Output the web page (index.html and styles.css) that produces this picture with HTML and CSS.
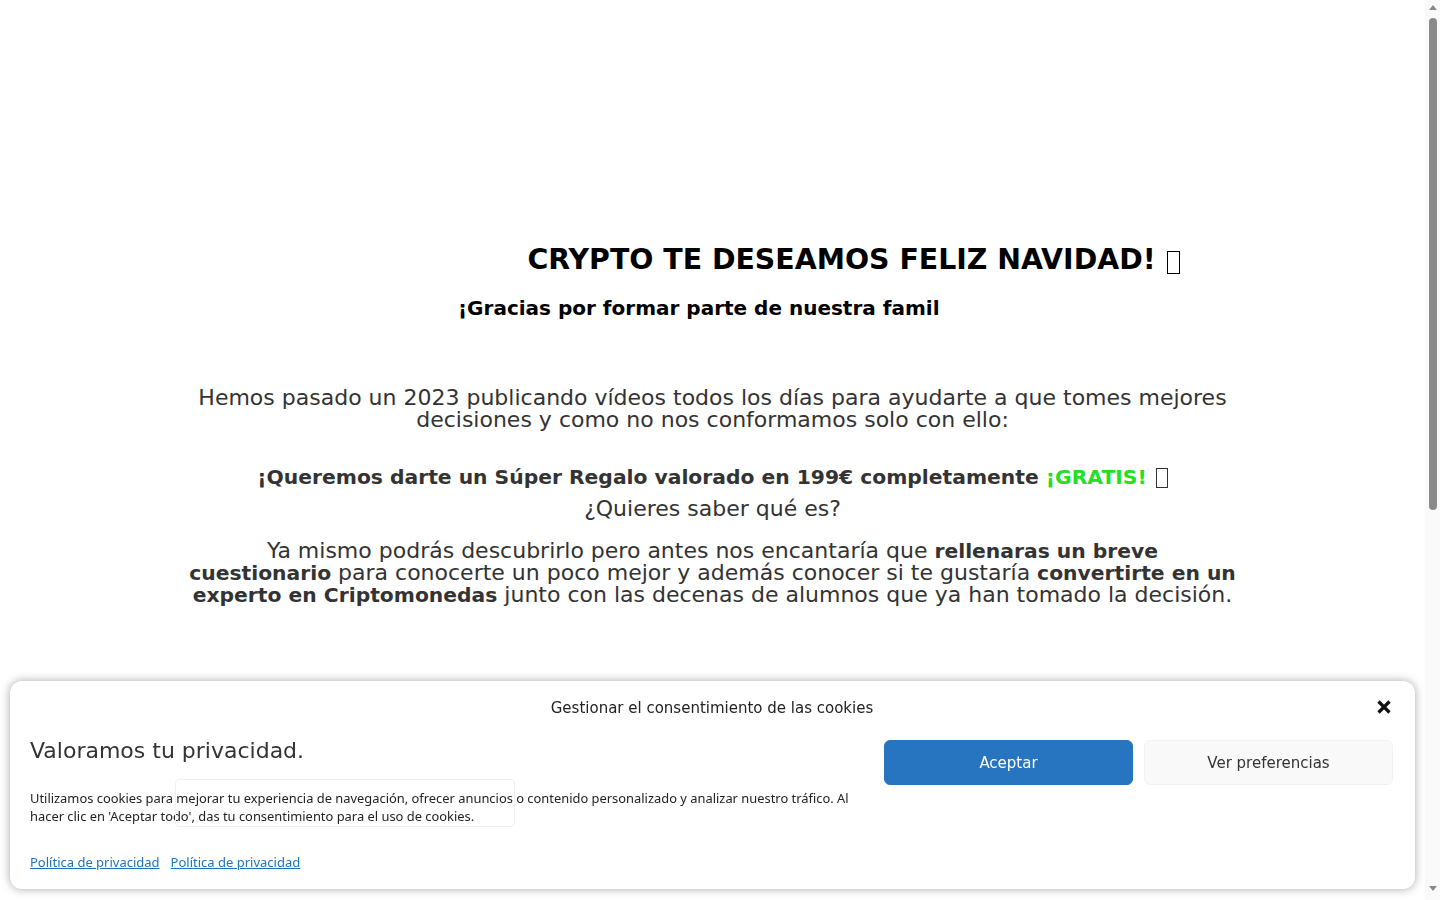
FILE: index.html
```html
<!DOCTYPE html>
<html lang="es">
<head>
<meta charset="utf-8">
<title>Crypto - Feliz Navidad</title>
<link rel="stylesheet" href="styles.css">
</head>
<body>
<main class="page">
  <section class="hero">
    <h1 class="title">CRYPTO TE DESEAMOS FELIZ NAVIDAD! <span class="tofu"></span></h1>
    <p class="typing">¡Gracias por formar parte de nuestra famil</p>
  </section>
  <section class="intro">
    <p class="lead">Hemos pasado un 2023 publicando vídeos todos los días para ayudarte a que tomes mejores<br>decisiones y como no nos conformamos solo con ello:</p>
    <p class="gift"><strong>¡Queremos darte un Súper Regalo valorado en 199€ completamente <span class="green">¡GRATIS!</span></strong> <span class="tofu tofu-sm"></span></p>
    <p class="question">¿Quieres saber qué es?</p>
    <p class="explain">Ya mismo podrás descubrirlo pero antes nos encantaría que <strong>rellenaras un breve</strong><br><strong>cuestionario</strong> para conocerte un poco mejor y además conocer si te gustaría <strong>convertirte en un</strong><br><strong>experto en Criptomonedas</strong> junto con las decenas de alumnos que ya han tomado la decisión.</p>
  </section>
</main>

<div class="cookie-banner">
  <div class="cookie-header">
    <span class="cookie-title">Gestionar el consentimiento de las cookies</span>
    <button class="cookie-close" aria-label="Cerrar">
      <svg width="16" height="16" viewBox="0 0 16 16"><path d="M2.5 2.5 L13.5 13.5 M13.5 2.5 L2.5 13.5" stroke="#111" stroke-width="3.2" stroke-linecap="butt"/></svg>
    </button>
  </div>
  <div class="cookie-body">
    <h2 class="cookie-heading">Valoramos tu privacidad.</h2>
    <p class="cookie-message">Utilizamos cookies para mejorar tu experiencia de navegación, ofrecer anuncios o contenido personalizado y analizar nuestro tráfico. Al<br>hacer clic en 'Aceptar todo', das tu consentimiento para el uso de cookies.</p>
    <div class="cookie-links">
      <a href="#">Política de privacidad</a>
      <a href="#">Política de privacidad</a>
    </div>
  </div>
  <div class="cookie-buttons">
    <button class="btn btn-accept">Aceptar</button>
    <button class="btn btn-prefs">Ver preferencias</button>
  </div>
  <div class="ghost-box"></div>
</div>

<div class="scrollbar" aria-hidden="true">
  <span class="sb-arrow sb-up"></span>
  <span class="sb-thumb"></span>
  <span class="sb-arrow sb-down"></span>
</div>
</body>
</html>
```

FILE: styles.css
```css
html, body {
  margin: 0;
  padding: 0;
  background: #ffffff;
}

body {
  font-family: "DejaVu Sans", "Noto Sans", sans-serif;
  color: #333333;
  overflow: hidden;
}

.page {
  width: 1425px;
  height: 900px;
}

.hero {
  padding-top: 242px;
}

.title {
  margin: 0;
  padding-left: 282px;
  text-align: center;
  font-size: 28.4px;
  line-height: 36px;
  font-weight: 700;
  color: #000000;
}

.tofu {
  display: inline-block;
  width: 13px;
  height: 23px;
  border: 1.5px solid #000;
  vertical-align: -5px;
  margin-left: 1px;
  box-sizing: border-box;
}

.tofu-sm {
  width: 12px;
  height: 20px;
  border-color: #333;
  border-width: 1.4px;
  vertical-align: -4px;
  margin-left: 2px;
}

.typing {
  margin: 17px 0 0;
  padding-left: 458px;
  font-size: 20px;
  line-height: 26px;
  font-weight: 700;
  color: #000000;
}

.intro {
  width: 1100px;
  margin: 66px auto 0;
  text-align: center;
  font-size: 22px;
  line-height: 22px;
}

.intro p {
  margin: 0;
}

.intro strong {
  font-weight: 700;
  font-size: 20.3px;
}

.intro .gift {
  margin-top: 35px;
}

.green {
  color: #22e022;
}

.intro .question {
  margin-top: 10px;
}

.intro .explain {
  margin-top: 20px;
}

/* Cookie banner */
.cookie-banner {
  position: fixed;
  left: 10px;
  right: 25px;
  bottom: 11px;
  box-sizing: border-box;
  padding: 16px 21px 18px 20px;
  background: #ffffff;
  border-radius: 12px;
  box-shadow: 0 0 10px rgba(0, 0, 0, 0.35);
  display: grid;
  grid-template-columns: 1fr 510px;
  column-gap: 10px;
}

.cookie-header {
  grid-column: 1 / -1;
  display: flex;
  justify-content: center;
  align-items: center;
  position: relative;
  height: 22px;
}

.cookie-title {
  font-size: 15px;
  color: #222;
}

.cookie-close {
  position: absolute;
  right: 2px;
  top: 2px;
  border: 0;
  padding: 0;
  background: none;
  width: 16px;
  height: 16px;
  display: flex;
}

.cookie-body {
  padding-top: 22px;
}

.cookie-heading {
  margin: 0;
  font-size: 22px;
  line-height: 20px;
  font-weight: 400;
  color: #333;
}

.cookie-message {
  margin: 28px 0 0;
  font-family: "Noto Sans", sans-serif;
  font-size: 12.9px;
  line-height: 18px;
  color: #222;
}

.cookie-links {
  margin-top: 28px;
  display: flex;
  gap: 11px;
  font-family: "Noto Sans", sans-serif;
  font-size: 13px;
  line-height: 18px;
}

.cookie-links a {
  color: #1e73be;
  text-decoration: underline;
}

.cookie-buttons {
  padding-top: 21px;
  display: flex;
  gap: 11px;
  align-items: flex-start;
}

.btn {
  width: 249px;
  height: 45px;
  border-radius: 6px;
  font-family: "DejaVu Sans", sans-serif;
  font-size: 15px;
  cursor: pointer;
}

.btn-accept {
  background: #2774c0;
  border: 1px solid #2774c0;
  color: #ffffff;
}

.btn-prefs {
  background: #f9f9f9;
  border: 1px solid #f2f2f2;
  color: #333;
}

.ghost-box {
  position: absolute;
  left: 165px;
  top: 98px;
  width: 340px;
  height: 48px;
  border: 1px solid #f0f0f0;
  border-radius: 4px;
  box-sizing: border-box;
  pointer-events: none;
}

/* Imitation of the browser scrollbar */
.scrollbar {
  position: fixed;
  top: 0;
  right: 0;
  width: 15px;
  height: 900px;
  background: #fafafa;
  display: flex;
  flex-direction: column;
  align-items: center;
}

.sb-arrow {
  width: 0;
  height: 0;
  border-left: 4.5px solid transparent;
  border-right: 4.5px solid transparent;
}

.sb-up {
  margin-top: 5px;
  border-bottom: 5px solid #8a8a8a;
}

.sb-thumb {
  margin-top: 8px;
  width: 8px;
  height: 492px;
  border-radius: 4px;
  background: #8a8a8a;
}

.sb-down {
  margin-top: auto;
  margin-bottom: 9px;
  border-top: 5px solid #8a8a8a;
}
```
